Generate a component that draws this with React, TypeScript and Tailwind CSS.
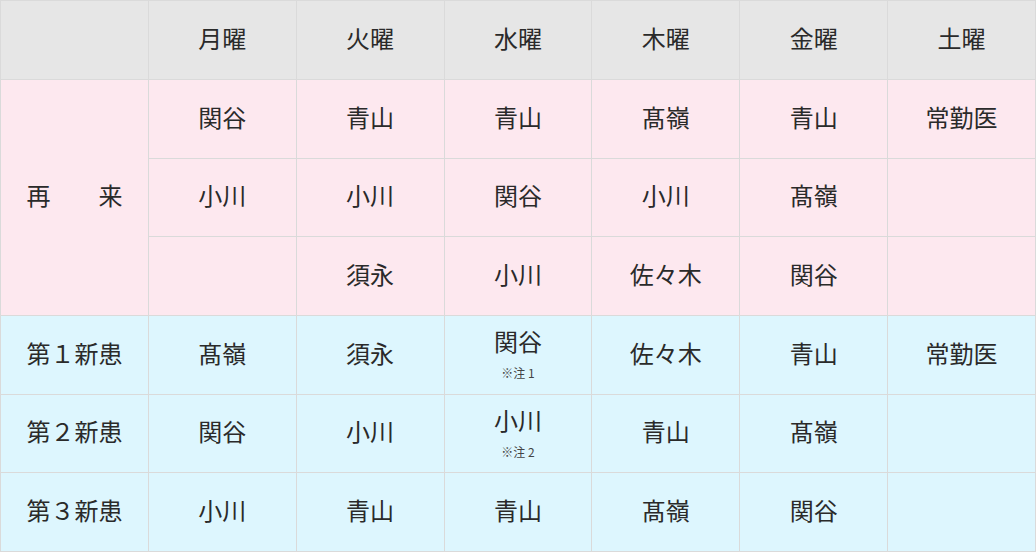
const days = ['月曜', '火曜', '水曜', '木曜', '金曜', '土曜']

type Cell = { name: string; note?: string }

const revisit: Cell[][] = [
  [{ name: '関谷' }, { name: '青山' }, { name: '青山' }, { name: '髙嶺' }, { name: '青山' }, { name: '常勤医' }],
  [{ name: '小川' }, { name: '小川' }, { name: '関谷' }, { name: '小川' }, { name: '髙嶺' }, { name: '' }],
  [{ name: '' }, { name: '須永' }, { name: '小川' }, { name: '佐々木' }, { name: '関谷' }, { name: '' }],
]

const newPatients: { label: string; cells: Cell[] }[] = [
  {
    label: '第１新患',
    cells: [{ name: '髙嶺' }, { name: '須永' }, { name: '関谷', note: '※注 1' }, { name: '佐々木' }, { name: '青山' }, { name: '常勤医' }],
  },
  {
    label: '第２新患',
    cells: [{ name: '関谷' }, { name: '小川' }, { name: '小川', note: '※注 2' }, { name: '青山' }, { name: '髙嶺' }, { name: '' }],
  },
  {
    label: '第３新患',
    cells: [{ name: '小川' }, { name: '青山' }, { name: '青山' }, { name: '髙嶺' }, { name: '関谷' }, { name: '' }],
  },
]

const td = 'border border-[#dadada] text-center align-middle px-0 pt-0 pb-[5px]'

function NameCell({ c }: { c: Cell }) {
  return (
    <td className={td}>
      {c.note ? (
        <div className="flex flex-col items-center pt-[4px]">
          <span className="leading-[24px]">{c.name}</span>
          <span className="text-[12px] leading-[14px] mt-[13px] text-[#444]">{c.note}</span>
        </div>
      ) : (
        c.name
      )}
    </td>
  )
}

export default function App() {
  return (
    <div
      className="w-[1036px] h-[552px] bg-white text-[24px] text-[#2a2a2a]"
      style={{ fontFamily: '"Noto Sans CJK JP", "Noto Sans", sans-serif' }}
    >
      <table className="w-[1036px] table-fixed border-collapse">
        <thead>
          <tr className="h-[79px] bg-[#e6e6e6]">
            <th className={td + ' font-normal'}></th>
            {days.map((d) => (
              <th key={d} className={td + ' font-normal'}>{d}</th>
            ))}
          </tr>
        </thead>
        <tbody>
          {revisit.map((row, i) => (
            <tr key={i} className={`bg-[#fde8ef] ${i === 1 ? 'h-[78px]' : 'h-[79px]'}`}>
              {i === 0 && (
                <td rowSpan={3} className={td}>再　　来</td>
              )}
              {row.map((c, j) => (
                <NameCell key={j} c={c} />
              ))}
            </tr>
          ))}
          {newPatients.map((r, i) => (
            <tr key={r.label} className={`bg-[#ddf6fe] ${i === 1 ? 'h-[78px]' : 'h-[79px]'}`}>
              <td className={td}>{r.label}</td>
              {r.cells.map((c, j) => (
                <NameCell key={j} c={c} />
              ))}
            </tr>
          ))}
        </tbody>
      </table>
    </div>
  )
}
